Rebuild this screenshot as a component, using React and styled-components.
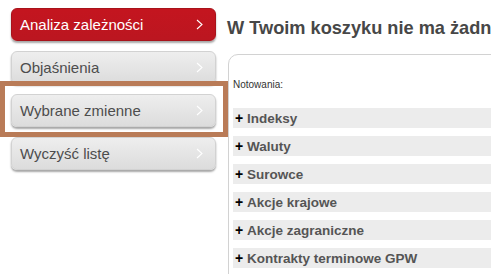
import React from "react";
import styled, { createGlobalStyle } from "styled-components";

const Global = createGlobalStyle`
  html, body { margin: 0; padding: 0; background: #fff; overflow: hidden; }
  body { font-family: "Liberation Sans", Arial, sans-serif; }
`;

const Page = styled.div`
  display: flex;
  width: 491px;
  height: 274px;
  overflow: hidden;
`;

const Sidebar = styled.nav`
  display: flex;
  flex-direction: column;
  gap: 10px;
  padding: 8px 0 0 11px;
  width: 205px;
  flex-shrink: 0;
`;

const MenuButton = styled.div`
  position: relative;
  box-sizing: border-box;
  height: 33px;
  display: flex;
  align-items: center;
  justify-content: space-between;
  padding: 0 12px 0 8px;
  border-radius: 6px;
  font-size: 15px;
  color: ${(p) => (p.$active ? "#fff" : "#4d4d4d")};
  background: ${(p) =>
    p.$active
      ? "linear-gradient(#c4151f, #bb1620)"
      : "linear-gradient(#eeeeee, #dcdcdc)"};
  border: 1px solid ${(p) => (p.$active ? "#a8131b" : "#d2d2d2")};
  box-shadow: 0 2px 2px rgba(0, 0, 0, 0.35);
`;

const Highlight = styled.div`
  position: absolute;
  left: -12px;
  top: -14px;
  right: -13px;
  bottom: -11px;
  border: 5px solid #b97b57;
  pointer-events: none;
`;

const Chevron = () => (
  <svg width="7" height="11" viewBox="0 0 7 11">
    <polyline points="1,1 6,5.5 1,10" fill="none" stroke="#fff" strokeWidth="1.1" />
  </svg>
);

const Main = styled.main`
  flex: 1;
  min-width: 0;
  padding-left: 11px;
  overflow: hidden;
`;

const Heading = styled.h1`
  margin: 17px 0 0 0;
  font-size: 18.2px;
  font-weight: bold;
  color: #474747;
  white-space: nowrap;
  line-height: 22px;
`;

const Panel = styled.section`
  margin-top: 15px;
  margin-left: 1px;
  width: 400px;
  height: 260px;
  border: 1px solid #d2d2d2;
  border-top-left-radius: 10px;
  padding: 24px 0 0 4px;
  box-sizing: border-box;
`;

const Label = styled.div`
  font-size: 10px;
  color: #333;
  line-height: 12px;
  margin-bottom: 17px;
`;

const Rows = styled.div`
  display: flex;
  flex-direction: column;
  gap: 8px;
`;

const Row = styled.div`
  height: 20px;
  background: #ececec;
  display: flex;
  align-items: center;
  padding-left: 2px;
  font-size: 13.5px;
  font-weight: bold;
  color: #555;
  white-space: nowrap;
`;

const Plus = styled.span`
  color: #000;
  width: 12px;
  font-size: 14px;
`;

const menu = [
  { label: "Analiza zależności", active: true },
  { label: "Objaśnienia" },
  { label: "Wybrane zmienne", highlight: true },
  { label: "Wyczyść listę" },
];

const rows = [
  "Indeksy",
  "Waluty",
  "Surowce",
  "Akcje krajowe",
  "Akcje zagraniczne",
  "Kontrakty terminowe GPW",
];

export default function App() {
  return (
    <>
      <Global />
      <Page>
        <Sidebar>
          {menu.map((m) => (
            <MenuButton key={m.label} $active={m.active}>
              <span>{m.label}</span>
              <Chevron />
              {m.highlight && <Highlight />}
            </MenuButton>
          ))}
        </Sidebar>
        <Main>
          <Heading>W Twoim koszyku nie ma żadnych zmiennych.</Heading>
          <Panel>
            <Label>Notowania:</Label>
            <Rows>
              {rows.map((r) => (
                <Row key={r}>
                  <Plus>+</Plus>
                  {r}
                </Row>
              ))}
            </Rows>
          </Panel>
        </Main>
      </Page>
    </>
  );
}
